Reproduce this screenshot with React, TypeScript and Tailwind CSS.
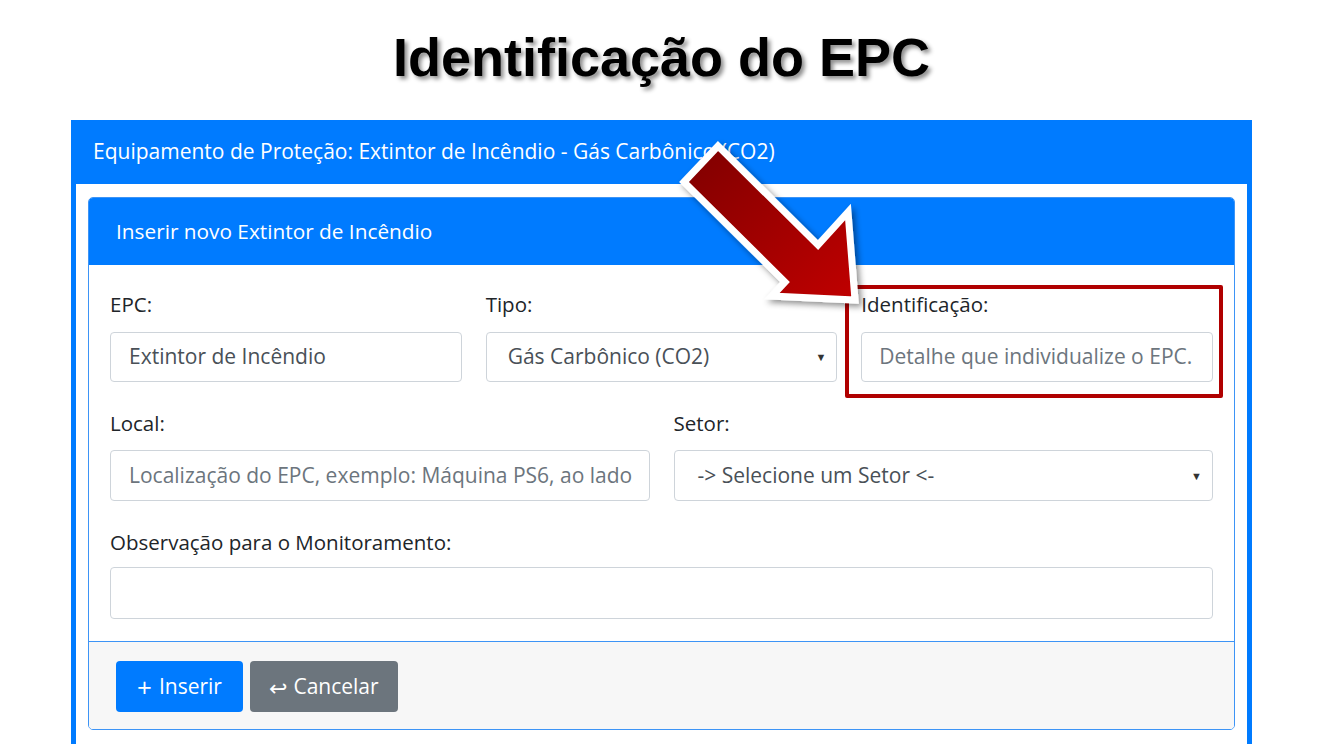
import React from 'react'

const font = { fontFamily: '"Open Sans", "Noto Sans", sans-serif' }

function Caret() {
  return <span className="absolute right-[10px] top-1/2 -translate-y-1/2 text-[11px] text-[#333]">▼</span>
}

export default function App() {
  return (
    <div className="relative w-[1323px] h-[744px] overflow-hidden bg-white" style={font}>
      {/* titulo do slide */}
      <div className="h-[120px] flex justify-center pt-[21px]">
        <h1 className="font-['Liberation_Sans',Arial,sans-serif] font-bold text-[54px] leading-[72px] text-black [text-shadow:3px_3px_4px_rgba(0,0,0,0.45)]">
          Identificação do EPC
        </h1>
      </div>

      {/* card externo */}
      <div className="mx-auto w-[1181px] bg-[#007bff] px-[5px]">
        <div className="h-[64px] flex items-center pl-[17px] text-white text-[21px]">
          Equipamento de Proteção: Extintor de Incêndio - Gás Carbônico (CO2)
        </div>
        <div className="bg-white pt-[13px] pl-[12px] pr-[12px] pb-[40px]">
          <div className="border border-[#3d94f6] rounded-[5px] overflow-hidden">
            <div className="h-[67px] bg-[#007bff] flex items-center pl-[27px] text-white text-[20.8px]">
              Inserir novo Extintor de Incêndio
            </div>

            <div className="px-[21px] pt-[25px] pb-[22px] text-[#212529] text-[20.5px]">
              <div className="grid grid-cols-3 gap-x-[24px]">
                <div>
                  <div className="h-[28px] leading-[28px] mb-[14px]">EPC:</div>
                  <div className="h-[50px] border border-[#ced4da] rounded-[4px] flex items-center pl-[18px] text-[#495057] text-[21px]">
                    Extintor de Incêndio
                  </div>
                </div>
                <div>
                  <div className="h-[28px] leading-[28px] mb-[14px]">Tipo:</div>
                  <div className="relative h-[50px] border border-[#ced4da] rounded-[4px] flex items-center pl-[21px] text-[#495057] text-[21px]">
                    Gás Carbônico (CO2)
                    <Caret />
                  </div>
                </div>
                <div>
                  <div className="h-[28px] leading-[28px] mb-[14px]">Identificação:</div>
                  <div className="h-[50px] border border-[#ced4da] rounded-[4px] flex items-center pl-[17px] text-[#6c757d] text-[21px] whitespace-nowrap overflow-hidden">
                    Detalhe que individualize o EPC.
                  </div>
                </div>
              </div>

              <div className="grid grid-cols-2 gap-x-[24px] mt-[27px]">
                <div>
                  <div className="h-[28px] leading-[28px] mb-[13px]">Local:</div>
                  <div className="h-[51px] border border-[#ced4da] rounded-[4px] flex items-center pl-[18px] text-[#6c757d] text-[21px] whitespace-nowrap overflow-hidden">
                    Localização do EPC, exemplo: Máquina PS6, ao lado
                  </div>
                </div>
                <div>
                  <div className="h-[28px] leading-[28px] mb-[13px]">Setor:</div>
                  <div className="relative h-[51px] border border-[#ced4da] rounded-[4px] flex items-center pl-[23px] text-[#495057] text-[21px]">
                    -&gt; Selecione um Setor &lt;-
                    <Caret />
                  </div>
                </div>
              </div>

              <div className="mt-[27px]">
                <div className="h-[28px] leading-[28px] mb-[11px]">Observação para o Monitoramento:</div>
                <div className="h-[52px] border border-[#ced4da] rounded-[4px]" />
              </div>
            </div>

            <div className="bg-[#f7f7f7] border-t border-[#3d94f6] pt-[19px] pb-[17px] pl-[27px] flex gap-[7px]">
              <button className="h-[51px] w-[127px] rounded-[4px] bg-[#007bff] text-white text-[21px] flex items-center justify-center gap-[7px]">
                <span className="text-[26px] leading-none">+</span>Inserir
              </button>
              <button className="h-[51px] w-[148px] rounded-[4px] bg-[#6c757d] text-white text-[21px] flex items-center justify-center gap-[6px]">
                <span className="text-[22px] leading-none">↩</span>Cancelar
              </button>
            </div>
          </div>
        </div>
      </div>

      {/* destaque vermelho */}
      <div className="absolute left-[845px] top-[285px] w-[378px] h-[113px] border-[4px] border-[#b00000] rounded-[2px]" />

      {/* seta */}
      <svg className="absolute left-0 top-0 pointer-events-none" width="1323" height="744">
        <defs>
          <linearGradient id="seta" x1="0" y1="0" x2="1" y2="1">
            <stop offset="0" stopColor="#7e0000" />
            <stop offset="1" stopColor="#c00000" />
          </linearGradient>
          <filter id="sombra" x="-20%" y="-20%" width="140%" height="140%">
            <feDropShadow dx="3" dy="3" stdDeviation="3" floodColor="#000" floodOpacity="0.45" />
          </filter>
        </defs>
        <polygon
          points="684,182 718,146 818,245 848,212 855,300 772,296 785,282"
          fill="url(#seta)"
          stroke="#fff"
          strokeWidth="7"
          strokeLinejoin="miter"
          filter="url(#sombra)"
        />
      </svg>
    </div>
  )
}
